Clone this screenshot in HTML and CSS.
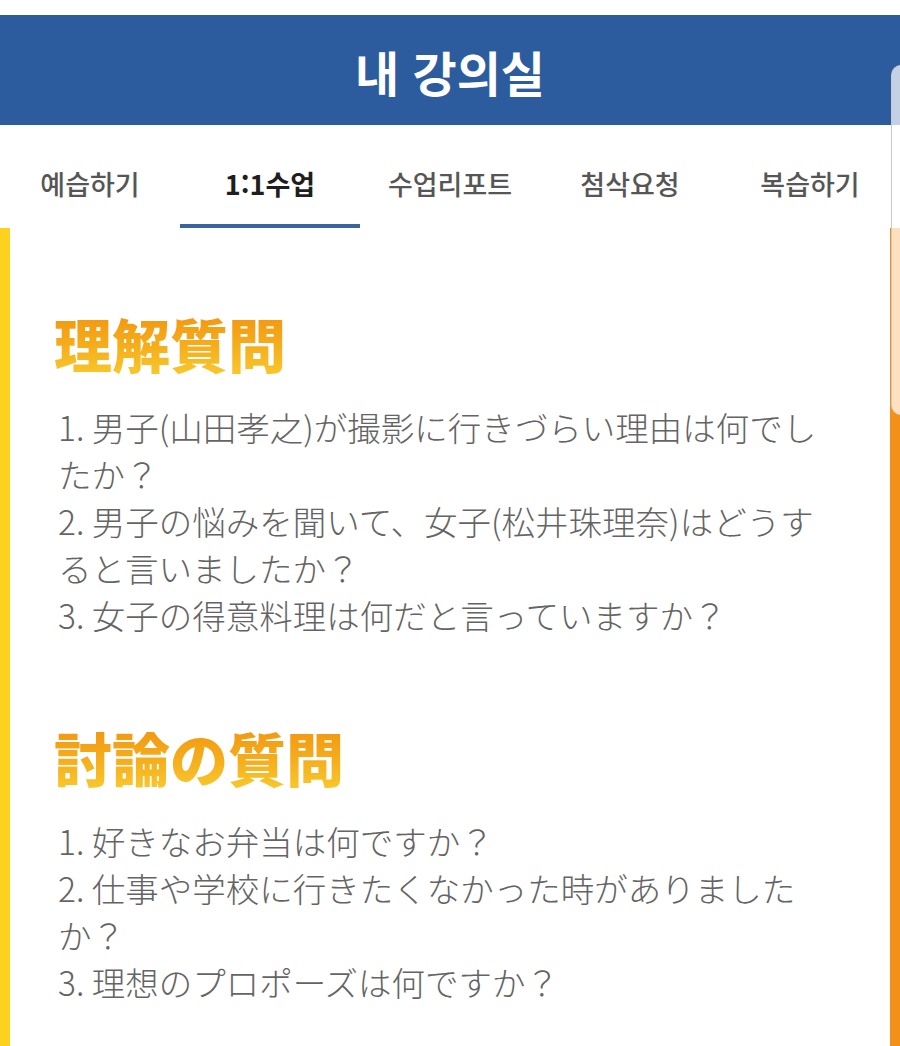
FILE: index.html
```html
<!DOCTYPE html>
<html lang="ko">
<head>
<meta charset="utf-8">
<title>내 강의실</title>
<link rel="stylesheet" href="styles.css">
</head>
<body>
<div class="page">
  <header class="header">
    <h1 class="title">내 강의실</h1>
  </header>
  <nav class="tabs">
    <div class="tab">예습하기</div>
    <div class="tab active">1:1수업</div>
    <div class="tab">수업리포트</div>
    <div class="tab">첨삭요청</div>
    <div class="tab">복습하기</div>
  </nav>
  <main class="main">
    <div class="edge-left"></div>
    <section class="content" lang="ja">
      <h2 class="heading first">理解質問</h2>
      <p class="text">1. 男子(山田孝之)が撮影に行きづらい理由は何でしたか？<br>2. 男子の悩みを聞いて、女子(松井珠理奈)はどうすると言いましたか？<br>3. 女子の得意料理は何だと言っていますか？</p>
      <h2 class="heading second">討論の質問</h2>
      <p class="text">1. 好きなお弁当は何ですか？<br>2. 仕事や学校に行きたくなかった時がありましたか？<br>3. 理想のプロポーズは何ですか？</p>
    </section>
    <div class="edge-right"></div>
  </main>
  <div class="peek"></div>
</div>
</body>
</html>
```

FILE: styles.css
```css
html, body {
  margin: 0;
  padding: 0;
  background: #ffffff;
}

.page {
  position: relative;
  width: 900px;
  height: 1046px;
  overflow: hidden;
  padding-top: 15px;
  box-sizing: border-box;
  font-family: "Noto Sans CJK KR", "Noto Sans CJK JP", sans-serif;
}

.header {
  height: 110px;
  background: #2c5c9e;
  display: flex;
  align-items: center;
  justify-content: center;
}

.title {
  margin: 0;
  color: #ffffff;
  font-size: 48px;
  font-weight: 700;
  line-height: 1;
  padding-top: 2px;
}

.tabs {
  height: 103px;
  display: grid;
  grid-template-columns: repeat(5, 180px);
  background: #ffffff;
}

.tab {
  display: flex;
  align-items: center;
  justify-content: center;
  font-size: 27px;
  font-weight: 500;
  color: #565656;
  border-bottom: 4px solid transparent;
  box-sizing: border-box;
  padding-top: 18px;
}

.tab.active {
  color: #1e1e1e;
  font-weight: 700;
  border-bottom-color: #3a64a0;
}

.main {
  display: grid;
  grid-template-columns: 10px 1fr 10px;
  min-height: 818px;
}

.edge-left {
  background: #fdd21f;
}

.edge-right {
  background: #f39019;
}

.content {
  background: #ffffff;
  padding: 80px 60px 0 48px;
  font-family: "Noto Sans CJK JP", sans-serif;
}

.heading {
  margin: 0 0 0 -4px;
  font-size: 58px;
  font-weight: 900;
  line-height: 70px;
  background: linear-gradient(180deg, #f1920f 0%, #f5ae1c 55%, #f9ca2e 100%);
  -webkit-background-clip: text;
  background-clip: text;
  color: transparent;
  display: inline-block;
}

.heading.second {
  margin-top: 84px;
}

.text {
  margin: 25px 0 0 0;
  font-size: 33.5px;
  font-weight: 300;
  line-height: 47px;
  color: #646464;
}

.peek {
  position: absolute;
  top: 65px;
  left: 891px;
  width: 12px;
  height: 350px;
  border-radius: 10px 0 0 10px;
  background: rgba(255, 255, 255, 0.72);
  border-left: 1px solid #c9c9c9;
  box-sizing: border-box;
}
```
